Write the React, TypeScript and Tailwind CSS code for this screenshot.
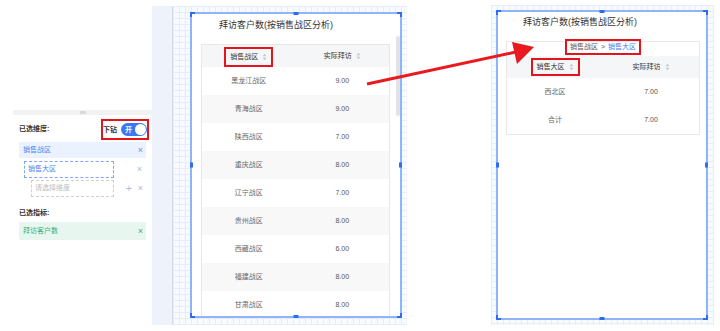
import React from 'react';

const font = "font-['Liberation_Sans','Noto_Sans_CJK_SC',sans-serif]";
const grid =
  'bg-[#f7faff] bg-[linear-gradient(to_right,#e6edf8_1px,transparent_1px),linear-gradient(to_bottom,#e6edf8_1px,transparent_1px)] bg-[size:6px_6px]';

const regionRows = [
  { name: '黑龙江战区', value: '9.00' },
  { name: '青海战区', value: '9.00' },
  { name: '陕西战区', value: '7.00' },
  { name: '重庆战区', value: '8.00' },
  { name: '辽宁战区', value: '7.00' },
  { name: '贵州战区', value: '8.00' },
  { name: '西藏战区', value: '6.00' },
  { name: '福建战区', value: '8.00' },
  { name: '甘肃战区', value: '8.00' },
];

function SortIcon() {
  return (
    <svg width="5" height="8" viewBox="0 0 5 8" className="ml-[4px] shrink-0">
      <path d="M2.5 0.8 L4.4 3.2 H0.6 Z" fill="#c3c7ce" />
      <path d="M2.5 7.2 L4.4 4.8 H0.6 Z" fill="#c3c7ce" />
    </svg>
  );
}

// selection handles drawn over the widget border
function Handles() {
  return (
    <>
      <div className="absolute -left-[2px] -top-[2px] w-[5px] h-[5px] border-l-2 border-t-2 border-[#2f6df0]" />
      <div className="absolute -right-[2px] -top-[2px] w-[5px] h-[5px] border-r-2 border-t-2 border-[#2f6df0]" />
      <div className="absolute -left-[2px] -bottom-[2px] w-[5px] h-[5px] border-l-2 border-b-2 border-[#2f6df0]" />
      <div className="absolute -right-[2px] -bottom-[2px] w-[5px] h-[5px] border-r-2 border-b-2 border-[#2f6df0]" />
      <div className="absolute left-1/2 -translate-x-1/2 -top-[2px] w-[5px] h-[3px] bg-[#2f6df0]" />
      <div className="absolute left-1/2 -translate-x-1/2 -bottom-[2px] w-[5px] h-[3px] bg-[#2f6df0]" />
      <div className="absolute top-1/2 -translate-y-1/2 -left-[2px] w-[3px] h-[5px] bg-[#2f6df0]" />
      <div className="absolute top-1/2 -translate-y-1/2 -right-[2px] w-[3px] h-[5px] bg-[#2f6df0]" />
    </>
  );
}

function LeftPanel() {
  return (
    <div className="w-[152px] shrink-0 pt-[110px] pl-[13px]">
      <div className="h-[5px] bg-[#f2f2f2] flex items-center justify-center">
        <div className="w-[6px] h-[3px] bg-[#dadada]" />
      </div>
      <div className="px-[6px]">
        <div className="mt-[4px] h-[21px] flex items-center justify-between">
          <span className="text-[7px] font-bold text-[#333]">已选维度:</span>
          <div className="-mr-[3px] w-[48px] h-[21px] border-2 border-[#e5141c] flex items-center gap-[4px]">
            <span className="text-[7px] font-bold text-[#333] leading-none">下钻</span>
            <div className="w-[26px] h-[13px] rounded-full bg-[#3b79f3] flex items-center justify-between pl-[4px] pr-[1px]">
              <span className="text-[7px] font-bold text-white leading-none">开</span>
              <div className="w-[11px] h-[11px] rounded-full bg-white" />
            </div>
          </div>
        </div>

        <div className="mt-[2px] h-[16px] bg-[#e9f2fe] flex items-center justify-between pl-[4px] pr-[3px]">
          <span className="text-[7px] text-[#4a82f0]">销售战区</span>
          <span className="text-[9px] text-[#6f93d6] leading-none">×</span>
        </div>

        <div className="mt-[3px] h-[17px] flex items-center pr-[4px]">
          <div className="ml-[5px] w-[90px] h-[17px] border border-dashed border-[#7ea6f3] flex items-center pl-[3px]">
            <span className="text-[7px] text-[#4a82f0]">销售大区</span>
          </div>
          <span className="ml-auto text-[9px] text-[#a9badb] leading-none">×</span>
        </div>

        <div className="mt-[2px] h-[17px] flex items-center pr-[3px]">
          <div className="ml-[12px] w-[83px] h-[17px] border border-dashed border-[#cfcfcf] flex items-center pl-[3px]">
            <span className="text-[7px] text-[#bdbdbd]">请选择维度</span>
          </div>
          <span className="ml-auto text-[10px] text-[#a9badb] leading-none">+</span>
          <span className="ml-[6px] text-[9px] text-[#a9badb] leading-none">×</span>
        </div>

        <div className="mt-[11px] h-[10px] flex items-center">
          <span className="text-[7px] font-bold text-[#333]">已选指标:</span>
        </div>

        <div className="mt-[4px] h-[18px] bg-[#e7f7ef] flex items-center justify-between pl-[4px] pr-[3px]">
          <span className="text-[7px] text-[#3aae78]">拜访客户数</span>
          <span className="text-[9px] text-[#3aae78] leading-none">×</span>
        </div>
      </div>
    </div>
  );
}

function RegionWidget() {
  return (
    <div className="relative ml-[17px] mt-[6px] w-[212px] h-[306px] bg-white border-2 border-[#8db5f7]">
      <Handles />
      <div className="h-full overflow-hidden">
        <div className="pt-[5px] pl-[27px] text-[9px] leading-[12px] text-[#333]">
          拜访客户数(按销售战区分析)
        </div>
        <div className="mt-[13px] ml-[9px] w-[189px] border border-[#e8e8e8]">
          <div className="h-[22px] bg-[#f5f6f7] flex items-end text-[7px] text-[#333]">
            <div className="w-1/2 flex justify-center">
              <div className="h-[20px] px-[4px] border-2 border-[#e5141c] flex items-center">
                销售战区
                <SortIcon />
              </div>
            </div>
            <div className="w-1/2 h-full flex items-center justify-center">
              实际拜访
              <SortIcon />
            </div>
          </div>
          {regionRows.map((row, i) => (
            <div
              key={row.name}
              className={`h-[28px] flex items-center text-[7px] ${i % 2 === 1 ? 'bg-[#f8f8f8]' : 'bg-white'}`}
            >
              <div className="w-1/2 text-center text-[#666]">{row.name}</div>
              <div className="w-1/2 text-center text-[#555]">{row.value}</div>
            </div>
          ))}
        </div>
      </div>
      {/* scrollbar */}
      <div className="absolute right-[0px] top-[22px] w-[4px] h-[80px] rounded-full bg-[#e3e3e3]" />
    </div>
  );
}

function AreaWidget() {
  return (
    <div className="relative ml-[5px] mt-[5px] w-[212px] h-[310px] bg-white border-2 border-[#8db5f7]">
      <Handles />
      <div className="pt-[4px] pl-[25px] text-[9px] leading-[12px] text-[#333]">
        拜访客户数(按销售战区分析)
      </div>
      <div className="mt-[13px] ml-[8px] w-[194px] border border-[#e8e8e8]">
        <div className="h-[14px] flex items-start justify-center">
          <div className="-mt-[3px] h-[16px] px-[3px] border-2 border-[#e5141c] flex items-center text-[7px]">
            <span className="text-[#555]">销售战区</span>
            <span className="mx-[3px] text-[#555]">&gt;</span>
            <span className="text-[#3f7ff2]">销售大区</span>
          </div>
        </div>
        <div className="h-[22px] bg-[#f5f6f7] flex items-center text-[7px] text-[#333]">
          <div className="w-1/2 flex justify-center">
            <div className="h-[18px] px-[4px] border-2 border-[#e5141c] flex items-center">
              销售大区
              <SortIcon />
            </div>
          </div>
          <div className="w-1/2 flex items-center justify-center">
            实际拜访
            <SortIcon />
          </div>
        </div>
        <div className="h-[28px] flex items-center text-[7px]">
          <div className="w-1/2 text-center text-[#666]">西北区</div>
          <div className="w-1/2 text-center text-[#555]">7.00</div>
        </div>
        <div className="h-[28px] flex items-center text-[7px]">
          <div className="w-1/2 text-center text-[#666]">合计</div>
          <div className="w-1/2 text-center text-[#555]">7.00</div>
        </div>
      </div>
    </div>
  );
}

export default function App() {
  return (
    <div className={`relative w-[720px] h-[331px] overflow-hidden bg-white flex ${font}`}>
      <LeftPanel />
      <div className="mt-[6px] w-[21px] h-[319px] shrink-0 bg-[#eef3fb] border-r border-[#d6dbe4]" />
      <div className={`mt-[6px] w-[234px] h-[319px] shrink-0 ${grid}`}>
        <RegionWidget />
      </div>
      <div className="w-[84px] shrink-0" />
      <div className={`mt-[5px] w-[223px] h-[320px] shrink-0 ${grid}`}>
        <AreaWidget />
      </div>

      {/* red arrow */}
      <svg className="absolute inset-0 pointer-events-none" width="720" height="331" viewBox="0 0 720 331">
        <line x1="367" y1="84" x2="516" y2="52" stroke="#e8191f" strokeWidth="3" />
        <polygon points="512,42 534,47 517,64" fill="#e8191f" />
      </svg>
    </div>
  );
}
